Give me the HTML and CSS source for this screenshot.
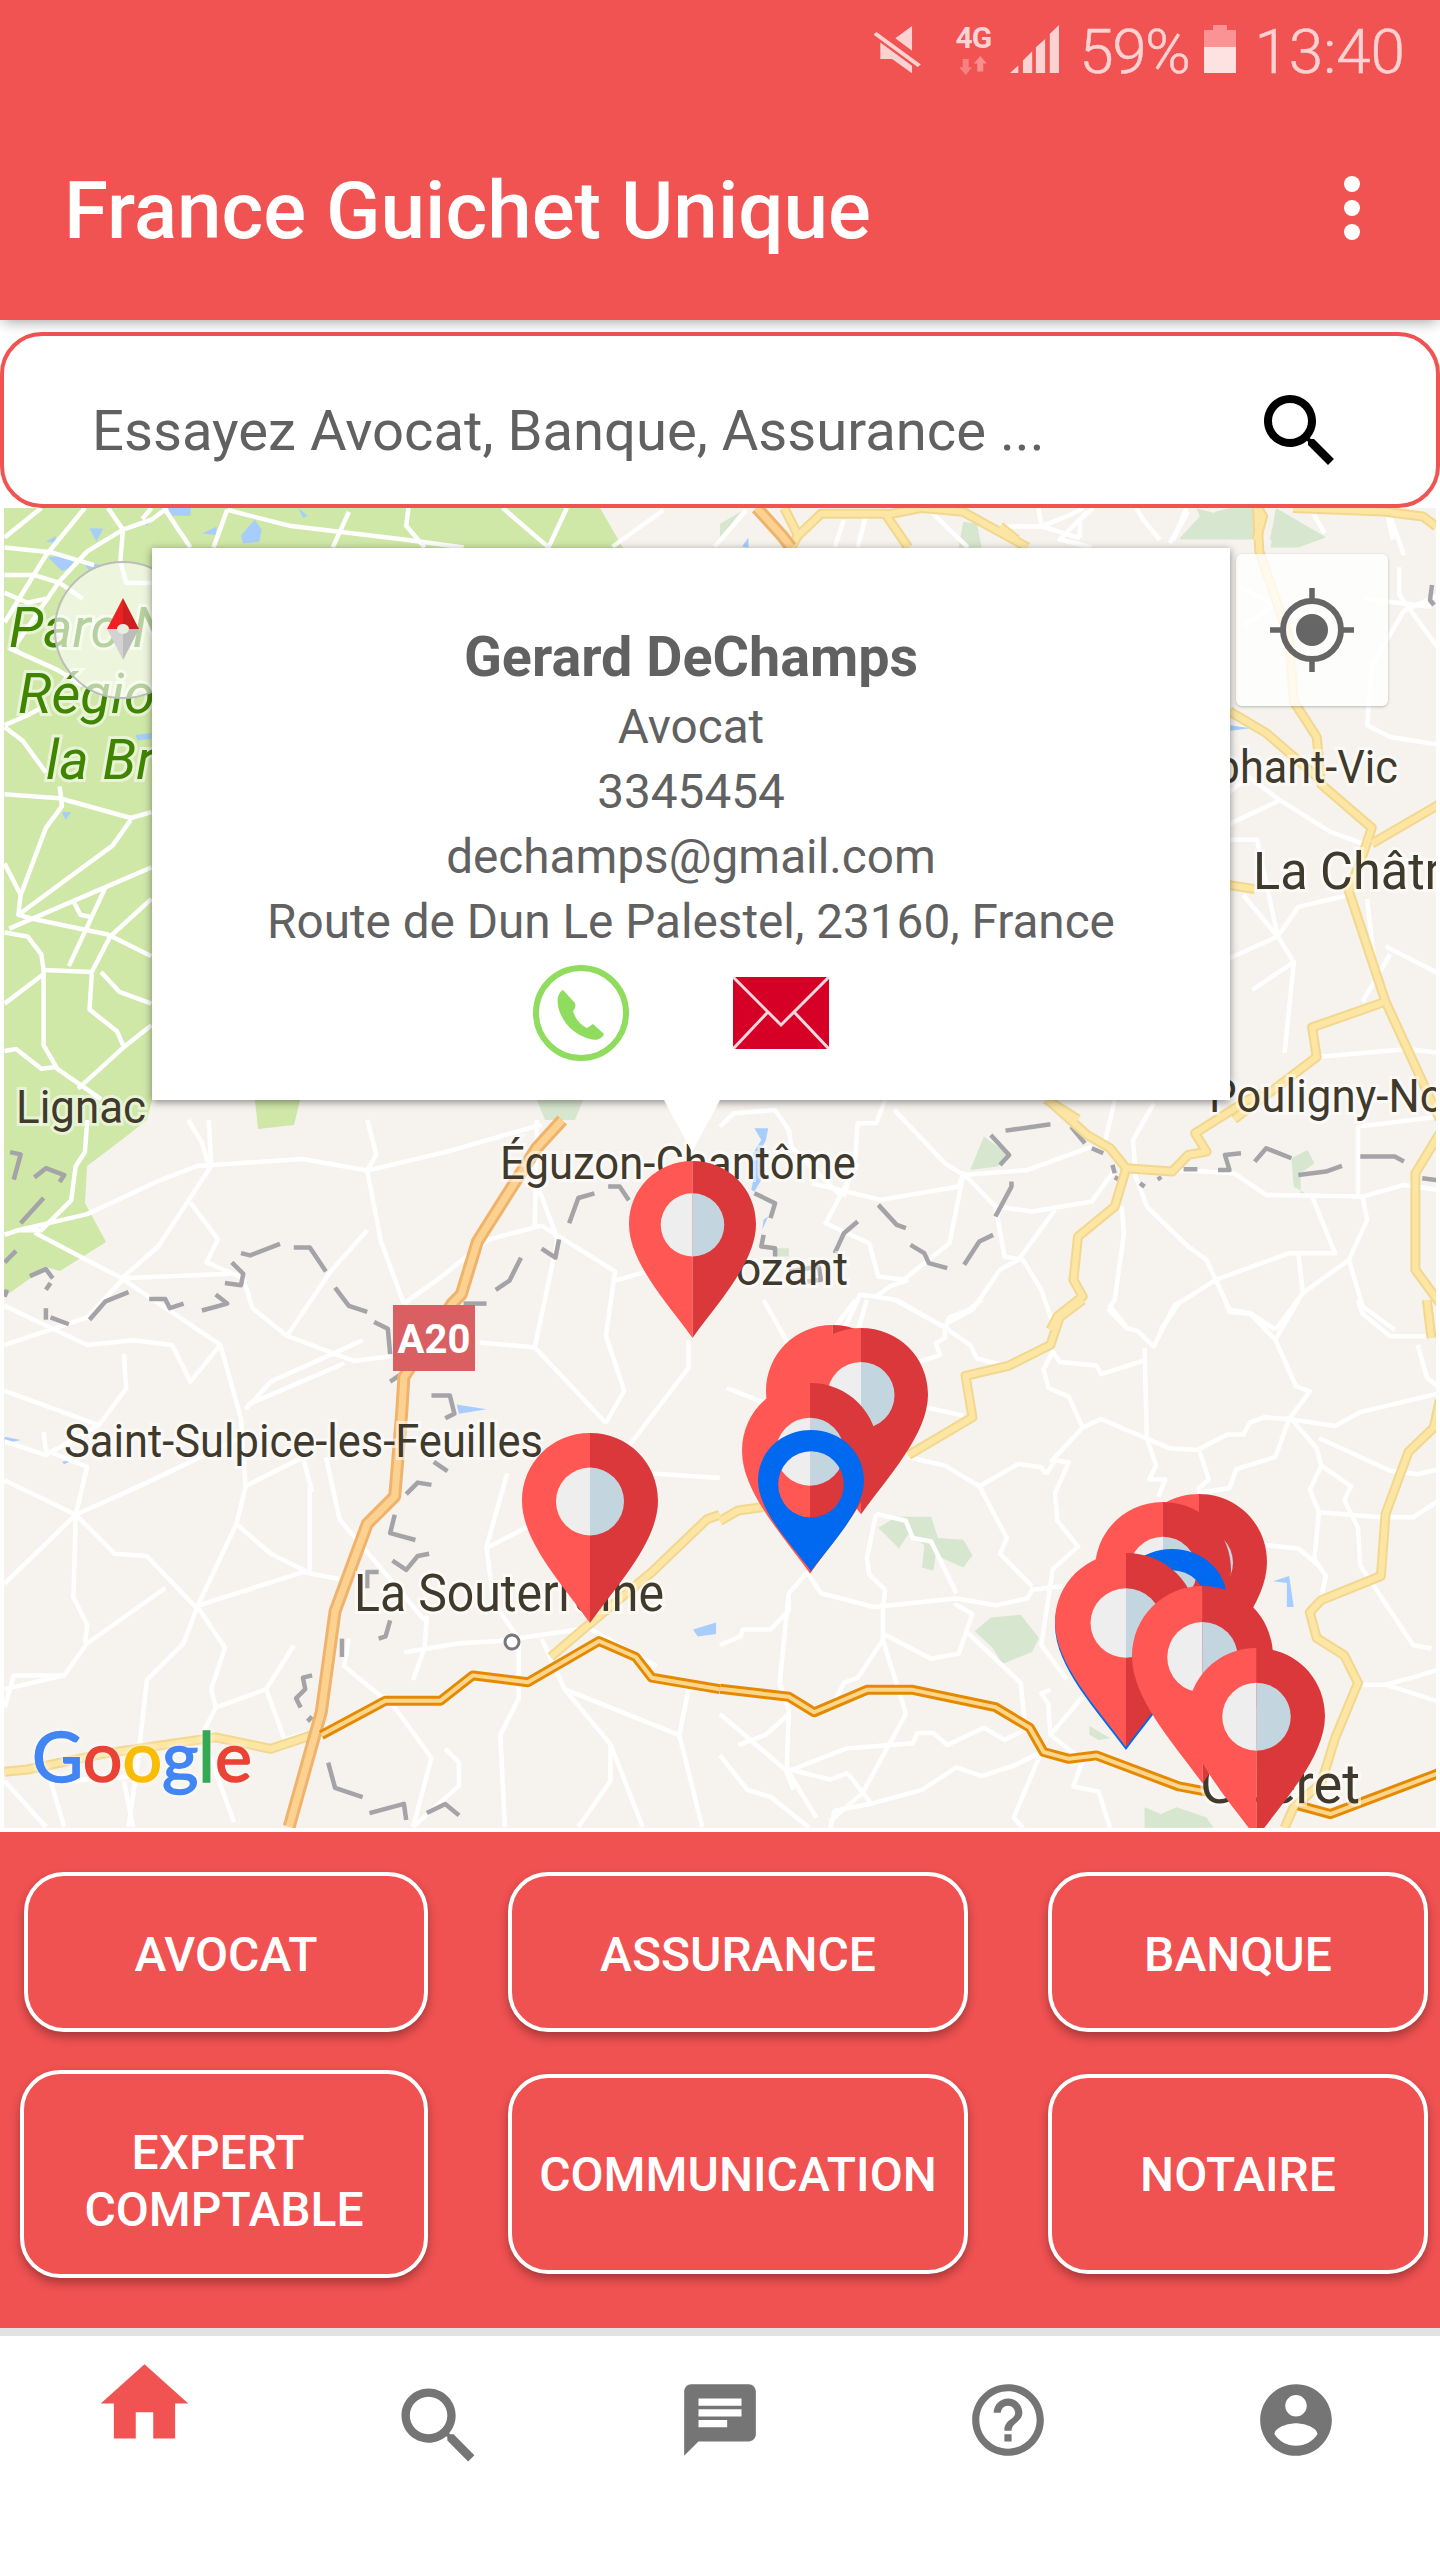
FILE: index.html
```html
<!DOCTYPE html>
<html lang="fr">
<head>
<meta charset="utf-8">
<title>France Guichet Unique</title>
<link rel="stylesheet" href="styles.css">
</head>
<body>
<div class="app">
  <header class="appbar">
    <div class="status">
      <svg class="st-mute" viewBox="338 72 106 148" preserveAspectRatio="none"><path d="M422 75 385 112 422 150ZM352 125V175H378L422 218V195Z"/><path class="st-slash" d="M340 97 438 195"/></svg>
      <div class="st-net">
        <span class="st-4g">4G</span>
        <svg class="st-arrows" viewBox="515 165 70 56" preserveAspectRatio="none"><path class="st-dim" d="M526 174H540V198H548L533 221 518 198H526Z"/><path class="st-dimmer" d="M560 211H574V187H582L567 165 552 187H560Z"/></svg>
      </div>
      <svg class="st-signal" viewBox="632 73 106 145" preserveAspectRatio="none"><path d="M632 218 650 195V218ZM660 218V180L680 152V218ZM688 218V140L708 115V218ZM718 218V100L738 73V218Z"/></svg>
      <span class="st-text st-pct">59%</span>
      <div class="st-battery"><i class="bat-nub"></i><i class="bat-empty"></i><i class="bat-full"></i></div>
      <span class="st-text st-time">13:40</span>
    </div>
    <div class="titlebar">
      <h1 class="title">France Guichet Unique</h1>
      <div class="kebab"><i></i><i></i><i></i></div>
    </div>
  </header>

  <div class="search">
    <span class="search-text">Essayez Avocat, Banque, Assurance ...</span>
    <svg class="search-icon" viewBox="0 0 24 24"><path d="M15.5 14h-.79l-.28-.27C15.41 12.59 16 11.11 16 9.5 16 5.91 13.09 3 9.5 3S3 5.91 3 9.5 5.91 16 9.5 16c1.61 0 3.09-.59 4.23-1.57l.27.28v.79l5 4.99L20.49 19l-4.99-5zm-6 0C7.01 14 5 11.99 5 9.5S7.01 5 9.5 5 14 7.01 14 9.5 11.99 14 9.5 14z"/></svg>
  </div>

  <main class="map">
    <svg class="map-canvas" viewBox="4 508 1432 1320" preserveAspectRatio="none">
      <defs>
        <g id="pin">
          <path class="pin-l" d="M50 0C22 0 0 22 0 50 0 80 30 112 50 140Z"/>
          <path class="pin-r" d="M50 0C78 0 100 22 100 50 100 80 70 112 50 140Z"/>
          <path class="pin-cl" d="M50 25.500a25 25 0 0 0 0 50Z"/>
          <path class="pin-cr" d="M50 25.500a25 25 0 0 1 0 50Z"/>
        </g>
        <g id="pin-blue">
          <path class="pin-blue" fill-rule="evenodd" d="M50 0C22 0 0 22 0 50 0 80 30 112 50 140 70 112 100 80 100 50 100 22 78 0 50 0ZM50 21A31 33 0 0 1 50 87 31 33 0 0 1 50 21Z"/>
        </g>
        <g id="yellow-roads">
          <g transform="translate(720,1090) scale(.459,.333)">
            <polyline points="715,30 800,135 850,175 885,235 860,350 780,440 770,570 790,620 735,680 720,720"/>
            <polyline points="885,235 985,245 1020,195 1060,185 1035,130 1150,30 1180,10"/>
            <polyline points="1568,130 1515,250 1515,540 1568,640"/>
          </g>
          <g transform="translate(720,500) scale(.459,.395)">
            <polyline points="1170,20 1175,130 1240,350 1250,510 1300,600 1310,720 1420,830 1400,900 1370,990 1450,1270 1568,1568"/>
            <polyline points="1450,1270 1290,1335 1300,1410 1120,1568"/>
            <polyline points="1568,770 1420,870"/>
            <polyline points="1110,535 1190,590 1310,710"/>
            <polyline points="1110,975 1165,985"/>
            <polyline points="140,20 170,90 220,35 360,35 410,120"/>
            <polyline points="360,38 440,20 530,30 670,120"/>
            <polyline points="170,90 155,120"/>
            <polyline points="710,1517 780,1568"/>
          </g>
          <g transform="translate(1000,300) scale(.333)">
            <polyline points="775,625 790,650 770,720"/>
            <polyline points="880,625 1150,635 1270,650 1310,680"/>
            <polyline points="0,680 50,720"/>
          </g>
          <g transform="translate(720,1300) scale(.459,.345)">
            <polyline points="0,640 40,610 95,600"/>
            <polyline points="410,450 550,340 535,220 630,190 720,130 740,50 790,0"/>
            <polyline points="1540,0 1550,110"/>
            <polyline points="1568,290 1555,370 1500,440 1450,620 1440,800 1310,870 1285,905 1300,980 1360,1030 1390,1110 1340,1270 1310,1400 1250,1470 1230,1530"/>
          </g>
          <g transform="translate(0,1120) scale(.459)">
            <polyline points="1200,1170 1270,1110 1420,985 1540,870 1568,860"/>
            <polyline points="10,1420 60,1415 230,1380 470,1345 590,1370 680,1340"/>
          </g>
        </g>
        <g id="orange-roads">
          <g transform="translate(720,1300) scale(.459,.345)">
            <polyline points="0,1127 150,1150 205,1195 320,1130 420,1130 600,1180 675,1240 705,1310 760,1330 820,1320 1000,1410 1060,1425"/>
            <polyline points="1260,1465 1330,1490 1568,1370"/>
          </g>
          <g transform="translate(0,1120) scale(.459)">
            <polyline points="1568,1240 1420,1215 1385,1170 1305,1135 1150,1225 1030,1210 960,1265 840,1265 700,1340"/>
          </g>
        </g>
        <g id="a20-road">
          <g transform="translate(0,1120) scale(.459)">
            <polyline points="1225,0 1170,60 1100,170 1040,265 1005,380 985,400 880,560 875,640 860,820 800,880 730,1070 700,1290 630,1540"/>
          </g>
          <g transform="translate(720,500) scale(.459,.395)">
            <polyline points="80,20 135,90 155,120"/>
          </g>
        </g>
      </defs>

      <rect class="m-land" x="4" y="508" width="1432" height="1320"/>

      <polygon class="m-park" points="4,508 600,508 630,560 630,1100 300,1100 294,1125 258,1129 255,1100 152,1100 147,1120 124,1138 103,1154 87,1166 85,1203 106,1242 60,1271 46,1267 4,1297"/>
      <g class="m-wood">
        <polygon points="537,1100 583,1100 575,1120 545,1120"/>
        <g transform="translate(1000,300) scale(.333)">
          <polygon points="540,715 600,650 590,625 720,660 715,700"/>
          <polygon points="830,625 975,710 810,720"/>
        </g>
        <g transform="translate(720,1090) scale(.459,.333)">
          <polygon points="545,240 575,140 630,195 605,230"/>
          <polygon points="1245,205 1280,180 1295,220 1265,250 1265,310 1330,315 1285,318 1250,290"/>
          <polygon points="115,475 150,475 150,500 120,500"/>
        </g>
        <g transform="translate(720,1300) scale(.459,.345)">
          <polygon points="555,960 590,920 655,912 695,980 680,1020 615,1055 595,1010"/>
          <polygon points="345,660 370,640 380,628 460,628 475,690 530,695 550,740 530,775 470,740 465,785 440,775 445,710 410,680 390,720"/>
          <polygon points="925,1470 960,1490 995,1470 1060,1500 1075,1530 925,1530"/>
          <polygon points="805,1235 850,1270 825,1275 805,1260"/>
        </g>
        <g transform="translate(720,500) scale(.459,.395)">
          <polygon points="520,120 530,55 560,60 570,120"/>
          <polygon points="0,60 45,30 0,100"/>
          <polygon points="1000,100 1080,30 1110,20 1170,20 1165,100"/>
          <polygon points="1200,120 1210,25 1320,95 1260,120"/>
        </g>
      </g>
      <g class="m-water">
        <g transform="translate(0,500) scale(.459,.395)">
          <polygon points="365,20 415,20 415,40 375,40"/>
          <polygon points="195,72 225,72 210,105"/>
          <polygon points="105,145 145,140 165,165 135,180"/>
          <polygon points="175,150 220,165 195,180"/>
          <polygon points="525,90 555,50 570,75 565,105 530,110"/>
          <polygon points="440,85 472,68 470,88"/>
          <polygon points="650,20 670,40 660,45"/>
          <polygon points="100,105 122,92 120,108"/>
          <polygon points="310,55 330,52 320,65"/>
          <polygon points="135,790 155,790 143,810"/>
          <polygon points="295,595 330,590 330,605 300,608"/>
        </g>
        <g transform="translate(0,1120) scale(.459)">
          <polygon points="10,690 45,697 10,705"/>
          <polygon points="135,745 170,735 140,750"/>
          <polygon points="995,620 1060,630 1000,640"/>
          <polygon points="1510,1110 1560,1095 1560,1120 1520,1125"/>
        </g>
        <g transform="translate(720,1300) scale(.459,.345)">
          <polygon points="1205,815 1240,800 1250,890 1235,890 1235,820"/>
        </g>
        <g transform="translate(720,1090) scale(.459,.333)">
          <polygon points="75,115 105,115 100,150 85,190 90,270 75,305 68,300 75,255 72,190 90,150"/>
          <polygon points="95,390 105,380 92,420"/>
        </g>
        <g transform="translate(720,500) scale(.459,.395)">
          <polygon points="48,118 62,95 62,120"/>
          <polygon points="1112,570 1155,578 1112,584"/>
        </g>
      </g>

      <g class="m-road">
        <g transform="translate(0,500) scale(.459,.395)">
          <polyline points="10,95 90,20"/>
          <polyline points="185,20 100,140 10,310"/>
          <polyline points="235,20 268,75 190,130 130,205 35,365"/>
          <polyline points="268,75 330,50 365,20"/>
          <polyline points="330,20 310,48"/>
          <polyline points="360,25 415,120"/>
          <polyline points="495,25 465,120"/>
          <polyline points="495,25 630,65 880,100 1010,120"/>
          <polyline points="760,30 725,120"/>
          <polyline points="890,20 885,65 925,120"/>
          <polyline points="1095,20 1195,120 1235,20"/>
          <polyline points="268,75 262,155 275,210 330,210"/>
          <polyline points="10,120 110,132 205,165"/>
          <polyline points="10,190 75,190 130,210 180,250"/>
          <polyline points="10,235 60,260 100,250"/>
          <polyline points="20,375 125,430 180,470"/>
          <polyline points="10,570 60,545 100,520"/>
          <polyline points="10,575 50,610 100,690"/>
          <polyline points="10,745 130,755 285,805 330,790"/>
          <polyline points="130,725 135,775 100,830 45,1000"/>
          <polyline points="10,920 45,1000 40,1050 70,1060 235,1100 330,1155"/>
          <polyline points="20,1085 230,980 330,930"/>
          <polyline points="40,1050 245,875 285,810"/>
          <polyline points="10,1095 60,1105 90,1150 95,1190 95,1380 125,1440 220,1517"/>
          <polyline points="95,1190 200,1195 240,1105 330,1010"/>
          <polyline points="10,1275 95,1200"/>
          <polyline points="200,1200 195,1290 255,1345 270,1385 330,1330"/>
          <polyline points="220,1195 260,1245 330,1275"/>
          <polyline points="10,1395 35,1390 90,1440 125,1435"/>
          <polyline points="150,1180 230,980"/>
          <polyline points="160,1015 175,1050 195,1055"/>
          <polyline points="270,1385 170,1490"/>
        </g>
        <g transform="translate(0,1120) scale(.459)">
          <polyline points="190,0 185,70 165,100 155,175 90,240 40,240 10,250"/>
          <polyline points="40,240 190,205 340,135 430,100 660,85 800,110 970,70 1180,10"/>
          <polyline points="75,245 265,345 480,490 525,650 535,800 515,880 430,1060 400,1140 320,1220 300,1400 280,1540"/>
          <polyline points="410,0 440,50 455,100"/>
          <polyline points="455,0 460,100"/>
          <polyline points="800,0 820,75 800,110 830,265 880,400"/>
          <polyline points="460,100 345,275 265,345 500,335"/>
          <polyline points="415,180 475,260 450,310 530,345 550,410 625,470 770,525 850,515"/>
          <polyline points="625,470 720,330 800,240"/>
          <polyline points="480,490 415,570 375,490 290,480 190,490 10,405"/>
          <polyline points="270,510 275,585 215,665 10,590"/>
          <polyline points="215,665 100,730 10,700"/>
          <polyline points="95,680 100,720 190,755 165,860 10,785"/>
          <polyline points="10,490 190,430 270,345"/>
          <polyline points="165,860 10,1010"/>
          <polyline points="165,860 320,790 530,690"/>
          <polyline points="165,860 160,1040 190,1100 185,1140"/>
          <polyline points="165,860 250,945 320,950 425,1060 660,985 740,1000"/>
          <polyline points="515,880 590,945 670,985"/>
          <polyline points="675,800 675,985"/>
          <polyline points="430,1060 490,1150 460,1240"/>
          <polyline points="10,1240 140,1210 190,1140 360,1020"/>
          <polyline points="10,1280 30,1210 140,1210"/>
          <polyline points="530,800 660,735 680,810"/>
          <polyline points="710,735 740,870 925,1090"/>
          <polyline points="540,620 750,530"/>
          <polyline points="535,630 590,570 790,480"/>
          <polyline points="1045,485 1165,495 1320,660"/>
          <polyline points="1165,495 1215,260 1170,140"/>
          <polyline points="1170,0 1165,230"/>
          <polyline points="1180,230 1065,260 950,350 880,400"/>
          <polyline points="1180,230 1340,330 1320,470 1360,590 1320,660"/>
          <polyline points="1340,350 1480,310"/>
          <polyline points="1500,480 1500,540 1370,710"/>
          <polyline points="1105,770 1060,930 1075,1050 1130,1130"/>
          <polyline points="1065,930 1180,870"/>
          <polyline points="930,1080 925,1150 900,1220"/>
          <polyline points="880,1160 1000,1140 1090,1135 1260,1110"/>
          <polyline points="1130,1130 1130,1260 1090,1340 1100,1540"/>
          <polyline points="1180,1130 1230,1240 1330,1360 1400,1540"/>
          <polyline points="1230,1240 1480,1340 1530,1540"/>
          <polyline points="1330,1360 1330,1440 1260,1540"/>
          <polyline points="1500,1240 1480,1340"/>
          <polyline points="760,1130 750,1190 860,1280 940,1390 900,1540"/>
          <polyline points="640,1145 580,1240 470,1280 440,1340 510,1530"/>
          <polyline points="470,1280 460,1240"/>
          <polyline points="580,1240 620,1350 690,1330"/>
          <polyline points="10,1440 100,1540"/>
          <polyline points="110,1440 140,1540"/>
          <polyline points="270,1440 290,1540"/>
          <polyline points="140,1440 300,1430"/>
          <polyline points="970,1370 1000,1400 1000,1450 900,1540"/>
          <polyline points="1420,770 1568,780"/>
          <polyline points="1270,1100 1430,1190"/>
        </g>
        <g transform="translate(720,1090) scale(.459,.333)">
          <polyline points="0,110 30,70 120,60 150,120 155,170 265,320"/>
          <polyline points="360,30 340,100 300,100 295,200 270,320"/>
          <polyline points="380,60 490,220 530,255 670,240 810,170"/>
          <polyline points="200,280 350,330 520,290 530,250 600,350 680,365 810,335 860,240"/>
          <polyline points="530,255 500,460 400,570 345,560 325,460 230,400 240,375 300,220"/>
          <polyline points="600,350 620,500 660,510 700,600 730,720"/>
          <polyline points="730,360 650,510 610,540 550,660 495,700"/>
          <polyline points="900,240 930,350 1020,470 1060,510 1110,660 1155,670 1210,720"/>
          <polyline points="905,250 900,150 945,40"/>
          <polyline points="860,30 840,150"/>
          <polyline points="1000,240 1120,250 1190,315 1400,320 1490,285 1568,300"/>
          <polyline points="1390,320 1390,110 1568,80"/>
          <polyline points="1290,320 1340,490 1240,490 1080,570 1000,640 960,720"/>
          <polyline points="1400,320 1410,390 1370,510 1270,610 1210,720"/>
          <polyline points="1370,510 1400,650 1470,720"/>
          <polyline points="1260,490 1270,610"/>
          <polyline points="875,350 880,430 860,630 850,650 890,720"/>
          <polyline points="410,570 370,590 340,620 305,615 270,720"/>
          <polyline points="340,620 380,630 500,720"/>
        </g>
        <g transform="translate(720,500) scale(.459,.395)">
          <polyline points="1110,820 1220,760 1330,840 1400,870"/>
          <polyline points="1220,760 1150,700 1110,740"/>
          <polyline points="1110,860 1170,860 1215,1105 1250,1170 1230,1400"/>
          <polyline points="1110,1160 1215,1105 1260,1030 1370,1000"/>
          <polyline points="1140,1000 1215,1105"/>
          <polyline points="1410,1010 1430,1220"/>
          <polyline points="1450,1130 1568,1200"/>
          <polyline points="1460,1150 1400,1270"/>
          <polyline points="1300,1410 1500,1390 1568,1400"/>
          <polyline points="1490,280 1420,420 1410,570 1460,600 1568,620"/>
          <polyline points="1130,220 1210,265 1140,320"/>
          <polyline points="1490,280 1568,240"/>
          <polyline points="1400,250 1550,270"/>
          <polyline points="1480,170 1480,240 1568,380"/>
          <polyline points="1460,40 1490,140"/>
          <polyline points="1160,1240 1250,1170"/>
          <polyline points="250,120 270,50"/>
          <polyline points="300,120 320,30"/>
          <polyline points="460,30 540,120"/>
          <polyline points="800,30 740,100 810,120"/>
          <polyline points="1020,30 980,110"/>
        </g>
        <g transform="translate(1000,300) scale(.333)">
          <polyline points="115,625 125,680 0,680"/>
          <polyline points="125,680 240,715"/>
          <polyline points="240,715 240,660 280,625"/>
          <polyline points="125,680 200,650 250,625"/>
          <polyline points="410,625 430,660 480,720"/>
          <polyline points="560,625 520,720"/>
          <polyline points="940,640 975,700"/>
          <polyline points="1165,650 1180,720"/>
        </g>
        <g transform="translate(0,0) scale(.638,.408)">
          <polyline points="960,1340 1040,1250"/>
          <polyline points="1120,1340 1170,1250"/>
        </g>
        <g transform="translate(720,1300) scale(.459,.345)">
          <polyline points="15,255 100,300"/>
          <polyline points="95,0 150,130"/>
          <polyline points="250,80 295,0"/>
          <polyline points="300,90 320,0"/>
          <polyline points="385,0 490,80 545,130 560,170 620,190"/>
          <polyline points="490,80 500,50 540,30 570,0"/>
          <polyline points="490,80 490,110 470,125 480,160 430,180"/>
          <polyline points="410,300 530,335"/>
          <polyline points="410,455 490,480 565,540 650,475 700,485 710,505"/>
          <polyline points="565,540 625,690 610,735 680,830"/>
          <polyline points="710,505 730,465 760,470 730,560 735,640 780,715 725,780 700,1000 755,1100"/>
          <polyline points="720,470 790,370 830,345 980,430 1040,435 1105,390 1140,390 1155,355 1185,340 1240,345"/>
          <polyline points="790,370 760,280 715,255 705,200 725,150 740,180 820,190 830,215 925,175"/>
          <polyline points="925,140 930,400 950,480 935,520 970,520 955,570"/>
          <polyline points="845,25 885,80 910,90 945,135 990,15 1010,0"/>
          <polyline points="1100,0 1110,35 1155,40 1210,115 1255,250 1285,265 1240,345"/>
          <polyline points="1210,115 1260,0"/>
          <polyline points="1240,345 1340,365 1395,325 1568,270"/>
          <polyline points="1390,0 1400,40 1460,105 1540,105"/>
          <polyline points="1245,345 1300,430 1310,480 1285,550 1305,615 1440,630 1510,630 1568,580"/>
          <polyline points="1305,400 1460,495 1520,505 1568,490"/>
          <polyline points="1310,480 1375,540 1360,580 1390,660 1395,770 1510,1000 1550,1010"/>
          <polyline points="1520,130 1540,225 1568,255"/>
          <polyline points="1305,615 1295,750 1320,800 1310,860"/>
          <polyline points="1185,710 1260,720 1305,770"/>
          <polyline points="0,1000 45,975 50,955 110,955 150,900 150,850 190,790 220,850 335,890 515,865 600,885 670,865 680,840 745,830"/>
          <polyline points="150,850 130,1110 150,1190 145,1370 160,1420"/>
          <polyline points="360,840 355,890 355,985 300,1095 270,1110 240,1190"/>
          <polyline points="355,985 405,1200 310,1430 240,1510"/>
          <polyline points="360,970 460,1040 520,1025 550,910 510,880"/>
          <polyline points="340,620 320,750 325,795 360,840"/>
          <polyline points="340,620 405,640 420,690 460,700 515,850"/>
          <polyline points="0,1200 150,1370 210,1500"/>
          <polyline points="150,1365 275,1300 420,1285 430,1255 465,1255 495,1290 575,1240 620,1275 665,1245"/>
          <polyline points="540,965 655,1110 665,1240 700,1300"/>
          <polyline points="720,1130 700,1140 715,1170 720,1260 790,1150"/>
          <polyline points="720,1260 790,1335 770,1410 825,1425 850,1530"/>
          <polyline points="280,1370 240,1390 150,1360"/>
          <polyline points="280,1375 330,1460 440,1420 515,1355 570,1380 640,1350 700,1310"/>
          <polyline points="700,1310 640,1500 660,1530"/>
          <polyline points="330,1460 250,1480 240,1530"/>
          <polyline points="0,1320 60,1420 110,1440 195,1530"/>
          <polyline points="40,1290 100,1260 150,1200"/>
          <polyline points="1400,1115 1450,1115 1520,1090 1568,1070"/>
          <polyline points="1450,1115 1568,1165"/>
          <polyline points="1040,560 1110,545 1125,490 1210,455 1240,345"/>
          <polyline points="1040,550 1065,520 1045,440"/>
        </g>
      </g>

      <g class="m-border">
        <g transform="translate(0,1120) scale(.459)">
          <polyline points="22,70 45,75 30,130"/>
          <polyline points="75,125 100,105 140,120 130,135"/>
          <polyline points="45,225 95,170"/>
          <polyline points="10,310 35,285"/>
          <polyline points="65,340 100,325 115,345"/>
          <polyline points="100,370 110,355"/>
          <polyline points="10,385 15,370"/>
          <polyline points="100,410 100,435"/>
          <polyline points="110,430 150,445"/>
          <polyline points="195,435 230,395 280,375"/>
          <polyline points="325,390 360,390 370,410 400,400"/>
          <polyline points="440,415 495,400 470,380"/>
          <polyline points="490,355 525,360 530,335 505,310"/>
          <polyline points="525,290 545,295 610,270"/>
          <polyline points="640,278 675,278 710,330"/>
          <polyline points="730,365 760,405 800,418"/>
          <polyline points="815,440 845,455 850,510"/>
          <polyline points="850,570 880,550"/>
          <polyline points="1010,400 1060,400"/>
          <polyline points="1080,370 1110,350 1135,300"/>
          <polyline points="1180,280 1210,300 1218,260"/>
          <polyline points="1240,225 1260,170 1295,160"/>
          <polyline points="1325,145 1350,145 1370,175"/>
          <polyline points="940,600 980,600 990,640 970,650"/>
          <polyline points="945,745 975,765"/>
          <polyline points="885,815 910,790 940,795"/>
          <polyline points="860,860 850,900 905,915"/>
          <polyline points="855,960 885,980 910,950 935,945"/>
          <polyline points="800,1020 800,985 825,985"/>
          <polyline points="850,1090 840,1125 825,1130"/>
          <polyline points="745,1130 745,1170"/>
          <polyline points="680,1210 660,1215 665,1240 645,1260 655,1280"/>
          <polyline points="670,1310 680,1300"/>
          <polyline points="715,1400 730,1455 790,1475"/>
          <polyline points="805,1510 880,1490 885,1525"/>
          <polyline points="930,1510 970,1490 1000,1515"/>
        </g>
        <g transform="translate(720,1090) scale(.459,.333)">
          <polyline points="622,122 720,103"/>
          <polyline points="590,135 630,195 610,225"/>
          <polyline points="635,275 635,290 600,380"/>
          <polyline points="595,435 565,455 532,525"/>
          <polyline points="495,535 455,520 445,490 415,465"/>
          <polyline points="405,415 385,405 345,345"/>
          <polyline points="300,395 270,430 250,490"/>
          <polyline points="765,110 795,160"/>
          <polyline points="810,175 835,190"/>
          <polyline points="855,225 860,250"/>
          <polyline points="860,262 885,280"/>
          <polyline points="915,280 925,290"/>
          <polyline points="955,260 960,270"/>
          <polyline points="1010,238 1040,238"/>
          <polyline points="1085,240 1110,240 1100,195 1135,190"/>
          <polyline points="1165,215 1190,175 1245,205"/>
          <polyline points="1260,255 1320,245 1355,228"/>
          <polyline points="1395,200 1470,200 1490,215"/>
          <polyline points="1530,265 1568,272"/>
          <polyline points="75,310 120,340 110,385"/>
          <polyline points="95,435 90,470 120,475 120,500"/>
          <polyline points="150,545 215,530 220,570 190,575"/>
        </g>
        <polyline points="1432,585 1430,600 1434,605"/>
      </g>

      <use href="#yellow-roads" class="r-y-case"/>
      <use href="#yellow-roads" class="r-y-fill"/>
      <use href="#a20-road" class="r-a-case"/>
      <use href="#a20-road" class="r-a-fill"/>
      <use href="#orange-roads" class="r-o-case"/>
      <use href="#orange-roads" class="r-o-fill"/>

      <circle class="m-city" cx="512" cy="1642" r="7"/>

      <g class="m-park-label">
        <text x="9" y="647">Parc Naturel</text>
        <text x="18" y="713">Régional de</text>
        <text x="46" y="779">la Brenne</text>
      </g>
      <g class="m-label">
        <text x="16" y="1123" textLength="130" lengthAdjust="spacingAndGlyphs">Lignac</text>
        <text x="64" y="1457" textLength="479" lengthAdjust="spacingAndGlyphs">Saint-Sulpice-les-Feuilles</text>
        <text x="500" y="1179" textLength="356" lengthAdjust="spacingAndGlyphs">Éguzon-Chantôme</text>
        <text x="691" y="1285" textLength="157" lengthAdjust="spacingAndGlyphs">Crozant</text>
        <text x="1191" y="783" textLength="207" lengthAdjust="spacingAndGlyphs">Éphant-Vic</text>
        <text x="1209" y="1112" textLength="414" lengthAdjust="spacingAndGlyphs">Pouligny-Notre-Dame</text>
      </g>
      <g class="m-label m-label-lg">
        <text x="354" y="1611" textLength="310" lengthAdjust="spacingAndGlyphs">La Souterraine</text>
        <text x="1253" y="889" textLength="215" lengthAdjust="spacingAndGlyphs">La Châtre</text>
        <text class="m-label-xl" x="1200" y="1803" textLength="160" lengthAdjust="spacingAndGlyphs">Guéret</text>
      </g>

      <rect class="m-badge" x="393" y="1305" width="82" height="66"/>
      <text class="m-badge-text" x="434" y="1353" text-anchor="middle">A20</text>

      <text class="m-google" x="32" y="1782"><tspan class="g-blue">G</tspan><tspan class="g-red">o</tspan><tspan class="g-yellow">o</tspan><tspan class="g-blue">g</tspan><tspan class="g-green">l</tspan><tspan class="g-red">e</tspan></text>

      <use href="#pin" transform="translate(629,1161) scale(1.27,1.264)"/>
      <use href="#pin" transform="translate(522,1433) scale(1.36,1.357)"/>

      <use href="#pin" transform="translate(766,1325) scale(1.33,1.33)"/>
      <use href="#pin" transform="translate(794,1328) scale(1.34,1.33)"/>
      <use href="#pin" transform="translate(742,1383) scale(1.36,1.36)"/>
      <use href="#pin-blue" transform="translate(758,1430) scale(1.06,1.007)"/>

      <use href="#pin" transform="translate(1131,1494) scale(1.36,1.36)"/>
      <use href="#pin" transform="translate(1095,1502) scale(1.36,1.36)"/>
      <use href="#pin-blue" transform="translate(1117,1549) scale(1.1,1.01)"/>
      <use href="#pin-blue" transform="translate(1055,1556) scale(1.42,1.386)"/>
      <use href="#pin" transform="translate(1055,1553) scale(1.42,1.386)"/>
      <use href="#pin" transform="translate(1132,1586) scale(1.41,1.41)"/>
      <use href="#pin" transform="translate(1188,1648) scale(1.37,1.36)"/>
    </svg>

    <div class="compass">
      <svg class="compass-needle" viewBox="0 0 32 62"><path class="cn-red-l" d="M16 0 0 31H16Z"/><path class="cn-red-r" d="M16 0 32 31H16Z"/><path class="cn-gray-l" d="M0 31 16 62V31Z"/><path class="cn-gray-r" d="M32 31 16 62V31Z"/><ellipse class="cn-dot" cx="16" cy="31" rx="6" ry="5"/></svg>
    </div>

    <div class="locate">
      <svg class="locate-icon" viewBox="-46 -46 92 92"><circle class="lc-ring" r="29"/><circle class="lc-dot" r="16"/><path class="lc-tick" d="M0-42V-30M0 42V30M-42 0H-30M42 0H30"/></svg>
    </div>

    <section class="popup">
      <h2 class="popup-name">Gerard DeChamps</h2>
      <p class="popup-line">Avocat</p>
      <p class="popup-line">3345454</p>
      <p class="popup-line">dechamps@gmail.com</p>
      <p class="popup-line">Route de Dun Le Palestel, 23160, France</p>
      <div class="popup-actions">
        <svg class="ic-phone" viewBox="0 0 96 96"><circle class="ph-ring" cx="48" cy="48" r="45"/><path class="ph-set" d="M30 25C25 28 23 35 26 45 31 60 42 70 57 74 63 76 69 74 71 69L60 59C58 60 56 62 54 63 47 60 42 53 40 46 42 44 43 41 42 38Z"/></svg>
        <svg class="ic-mail" viewBox="0 0 96 72"><rect class="ml-bg" width="96" height="72"/><path class="ml-line" d="M0 0 48 48 96 0M0 72 34 36M96 72 62 36"/></svg>
      </div>
      <i class="popup-tail"></i>
    </section>
  </main>

  <section class="cats">
    <button class="cat">AVOCAT</button>
    <button class="cat">ASSURANCE</button>
    <button class="cat">BANQUE</button>
    <button class="cat cat-tall">EXPERT&nbsp;<br>COMPTABLE</button>
    <button class="cat cat-mid">COMMUNICATION</button>
    <button class="cat cat-mid">NOTAIRE</button>
  </section>

  <nav class="nav">
    <svg class="nav-ic nav-home" viewBox="0 0 24 24"><path d="M10 20v-6h4v6h5v-8h3L12 3 2 12h3v8z"/></svg>
    <svg class="nav-ic nav-search" viewBox="0 0 24 24"><path d="M15.5 14h-.79l-.28-.27C15.41 12.59 16 11.11 16 9.5 16 5.91 13.09 3 9.5 3S3 5.91 3 9.5 5.91 16 9.5 16c1.61 0 3.09-.59 4.23-1.57l.27.28v.79l5 4.99L20.49 19l-4.99-5zm-6 0C7.01 14 5 11.990 5 9.5S7.01 5 9.5 5 14 7.010 14 9.5 11.990 14 9.5 14z"/></svg>
    <svg class="nav-ic nav-std" viewBox="0 0 24 24"><path d="M20 2H4c-1.100 0-1.990.9-1.990 2L2 22l4-4h14c1.100 0 2-.9 2-2V4c0-1.100-.9-2-2-2zM6 9h12v2H6V9zm8 5H6v-2h8v2zm4-6H6V6h12v2z"/></svg>
    <svg class="nav-ic nav-std" viewBox="0 0 24 24"><path d="M11 18h2v-2h-2v2zm1-16C6.480 2 2 6.480 2 12s4.480 10 10 10 10-4.480 10-10S17.520 2 12 2zm0 18c-4.410 0-8-3.590-8-8s3.590-8 8-8 8 3.590 8 8-3.590 8-8 8zm0-14c-2.210 0-4 1.790-4 4h2c0-1.100.9-2 2-2s2 .9 2 2c0 2-3 1.750-3 5h2c0-2.250 3-2.500 3-5 0-2.210-1.790-4-4-4z"/></svg>
    <svg class="nav-ic nav-std" viewBox="0 0 24 24"><path d="M12 2C6.480 2 2 6.480 2 12s4.480 10 10 10 10-4.480 10-10S17.520 2 12 2zm0 3c1.660 0 3 1.340 3 3s-1.340 3-3 3-3-1.340-3-3 1.340-3 3-3zm0 14.200c-2.500 0-4.710-1.280-6-3.220.03-1.990 4-3.080 6-3.080 1.990 0 5.970 1.090 6 3.080-1.290 1.940-3.500 3.220-6 3.220z"/></svg>
  </nav>
</div>
</body>
</html>
```

FILE: styles.css
```css
* { box-sizing: border-box; }
html, body { margin: 0; padding: 0; background: #fff; }
body { font-family: Roboto, "Liberation Sans", sans-serif; }
.app { width: 1440px; height: 2560px; overflow: hidden; display: flex; flex-direction: column; }

/* App bar */
.appbar { position: relative; z-index: 2; height: 320px; background: #f15252; box-shadow: 0 4px 14px -3px rgba(0,0,0,.4); flex: none; }
.status { height: 96px; padding: 22px 35px 0 0; display: flex; justify-content: flex-end; align-items: flex-start; color: #fcd2d2; }
.status svg { fill: #fcd2d2; display: block; }
.st-mute { width: 48px; height: 49px; margin-top: 3px; }
.st-slash { stroke: #fcd2d2; stroke-width: 10; fill: none; }
.st-net { width: 38px; margin-left: 32px; margin-top: 1px; display: flex; flex-direction: column; align-items: center; }
.st-4g { font-size: 30px; font-weight: 700; line-height: 30px; letter-spacing: -1px; }
.status .st-arrows { width: 30px; height: 19px; margin-top: 3px; fill: none; }
.st-dim { fill: #f98080; }
.st-dimmer { fill: #f99090; }
.st-signal { width: 49px; height: 48px; margin-left: 18px; margin-top: 3px; }
.st-text { font-size: 62px; font-weight: 300; line-height: 60px; -webkit-text-stroke: .5px #fcd2d2; }
.st-pct { margin-left: 20px; letter-spacing: -1.5px; }
.st-time { margin-left: 18px; }
.st-battery { width: 32px; height: 48px; margin: 3px 0 0 15px; display: flex; flex-direction: column; align-items: center; }
.st-battery i { display: block; }
.bat-nub { width: 14px; height: 5px; background: #f99394; }
.bat-empty { width: 32px; height: 17px; background: #f99394; }
.bat-full { width: 32px; height: 26px; background: #fee2e2; }
.titlebar { height: 224px; padding: 0 80px 0 64px; display: flex; align-items: center; justify-content: space-between; }
.title { margin: 6px 0 0; color: #fff; font-size: 80px; line-height: 90px; font-weight: 500; }
.kebab { display: flex; flex-direction: column; gap: 8px; }
.kebab i { display: block; width: 16px; height: 16px; border-radius: 50%; background: #fff; }

/* Search */
.search { flex: none; height: 176px; margin-top: 12px; padding: 22px 88px 0 88px; border: 4px solid #f15252; border-radius: 42px; display: flex; align-items: center; justify-content: space-between; background: #fff; }
.search-text { font-size: 56.200px; color: #616161; white-space: nowrap; }
.search-icon { width: 96px; height: 96px; fill: #000; display: block; }

/* Map */
.map { position: relative; flex: none; height: 1320px; margin: 0 4px; overflow: hidden; }
.map-canvas { display: block; width: 1432px; height: 1320px; }
.m-land { fill: #f6f3ee; }
.m-park { fill: #cfe7a7; }
.m-wood { fill: #d7e6cf; }
.m-water { fill: #a6cdfc; }
polyline { vector-effect: non-scaling-stroke; stroke-linejoin: round; stroke-linecap: butt; fill: none; }
.m-road { stroke: #fff; stroke-width: 4.5px; fill: none; }
.m-border { stroke: #a3a3a8; stroke-width: 4.5px; fill: none; }
.r-y-case { stroke: #f2d78f; stroke-width: 10px; fill: none; }
.r-y-fill { stroke: #fde6a4; stroke-width: 6px; fill: none; }
.r-a-case { stroke: #f0b36c; stroke-width: 13px; fill: none; }
.r-a-fill { stroke: #fdd291; stroke-width: 7px; fill: none; }
.r-o-case { stroke: #e58a00; stroke-width: 10px; fill: none; }
.r-o-fill { stroke: #fdd68e; stroke-width: 4px; fill: none; }
.m-city { fill: #fff; stroke: #77777c; stroke-width: 3px; }
.m-label text { font-family: Roboto, sans-serif; font-size: 46px; fill: #3f3a2b; stroke: rgba(255,255,255,.55); stroke-width: 6px; paint-order: stroke; }
.m-label-lg text { font-size: 51px; }
.m-label-lg .m-label-xl { font-size: 56px; }
.m-park-label text { font-family: Roboto, sans-serif; font-style: italic; font-size: 56px; fill: #3f8500; stroke: rgba(255,255,255,.55); stroke-width: 6px; paint-order: stroke; }
.m-badge { fill: #d95f63; }
.m-badge-text { font-family: Roboto, sans-serif; font-weight: 700; font-size: 40px; fill: #fff; }
.m-google { font-family: Lato, sans-serif; font-size: 70px; font-weight: 400; stroke-width: 1.5px; filter: drop-shadow(0 0 3px rgba(255,255,255,.9)); }
.g-blue { fill: #4285f4; stroke: #4285f4; }
.g-red { fill: #ea4335; stroke: #ea4335; }
.g-yellow { fill: #fbbc05; stroke: #fbbc05; }
.g-green { fill: #34a853; stroke: #34a853; }
.pin-l { fill: #ff5753; }
.pin-r { fill: #db383c; }
.pin-cl { fill: #eeeeef; }
.pin-cr { fill: #c3d6df; }
.pin-blue { fill: #0069ef; }

.compass { position: absolute; left: 50px; top: 53px; width: 138px; height: 138px; border-radius: 50%; background: rgba(255,255,255,.62); border: 2px solid #bcbcbc; display: flex; align-items: center; justify-content: center; }
.compass-needle { display: block; width: 32px; height: 62px; margin: -3px 0 0 0; }
.cn-red-l { fill: #ec2222; }
.cn-red-r { fill: #cc1f1f; }
.cn-gray-l { fill: #d3d3d3; }
.cn-gray-r { fill: #bcbcbc; }
.cn-dot { fill: #e8efdf; }
.locate { position: absolute; left: 1232px; top: 46px; width: 152px; height: 152px; border-radius: 6px; background: rgba(255,255,255,.8); box-shadow: 0 1px 3px rgba(0,0,0,.25); display: flex; align-items: center; justify-content: center; }
.locate-icon { width: 92px; height: 92px; display: block; }
.lc-ring { fill: none; stroke: #666; stroke-width: 6px; }
.lc-dot { fill: #666; }
.lc-tick { fill: none; stroke: #666; stroke-width: 5.5px; }

.popup { position: absolute; left: 148px; top: 40px; width: 1078px; height: 552px; background: #fff; box-shadow: 0 2px 8px rgba(0,0,0,.45); padding-top: 71.500px; display: flex; flex-direction: column; align-items: center; color: #616161; text-align: center; }
.popup-name { margin: 0; font-size: 55.700px; font-weight: 700; line-height: 75px; white-space: nowrap; }
.popup-line { margin: 0; font-size: 47.700px; line-height: 65px; white-space: nowrap; }
.popup-actions { margin-top: 10px; padding-right: 20px; display: flex; align-items: center; gap: 104px; }
.popup-actions svg { display: block; }
.ic-phone { width: 96px; height: 96px; }
.ph-ring { fill: none; stroke: #8fdc5e; stroke-width: 6px; }
.ph-set { fill: #8fdc5e; }
.ic-mail { width: 96px; height: 72px; }
.ml-bg { fill: #d60026; }
.ml-line { fill: none; stroke: #fff; stroke-width: 3px; opacity: .85; }
.popup-tail { position: absolute; left: 512px; top: 552px; width: 0; height: 0; border-left: 28px solid transparent; border-right: 28px solid transparent; border-top: 52px solid #fff; }

/* Category buttons */
.cats { flex: none; margin-top: 4px; height: 496px; background: #f05151; padding: 40px 0 0 24px; display: grid; grid-template-columns: 404px 460px 380px; column-gap: 80px; grid-template-rows: 160px 208px; row-gap: 38px; }
.cat { display: block; height: 160px; border: 4px solid #fff; border-radius: 40px; background: #f05151; color: #fff; font: 500 48px/57px Roboto, sans-serif; padding: 4px 0 0; box-shadow: 0 5px 10px rgba(0,0,0,.3); align-self: center; }
.cat-tall { height: 208px; margin-left: -4px; padding-top: 14px; }
.cat-mid { height: 200px; padding-top: 1px; }

/* Bottom nav */
.nav { flex: none; position: relative; height: 232px; border-top: 8px solid #e2e2e2; background: #fff; display: grid; grid-template-columns: repeat(5, 288px); justify-items: center; align-items: start; }
.nav-ic { display: block; fill: #757575; }
.nav-home { width: 105px; height: 105px; margin-top: 15px; fill: #f15252; }
.nav-search { width: 100px; height: 100px; margin: 40px 0 0 14px; }
.nav-std { width: 86px; height: 86px; margin-top: 41px; }
```
